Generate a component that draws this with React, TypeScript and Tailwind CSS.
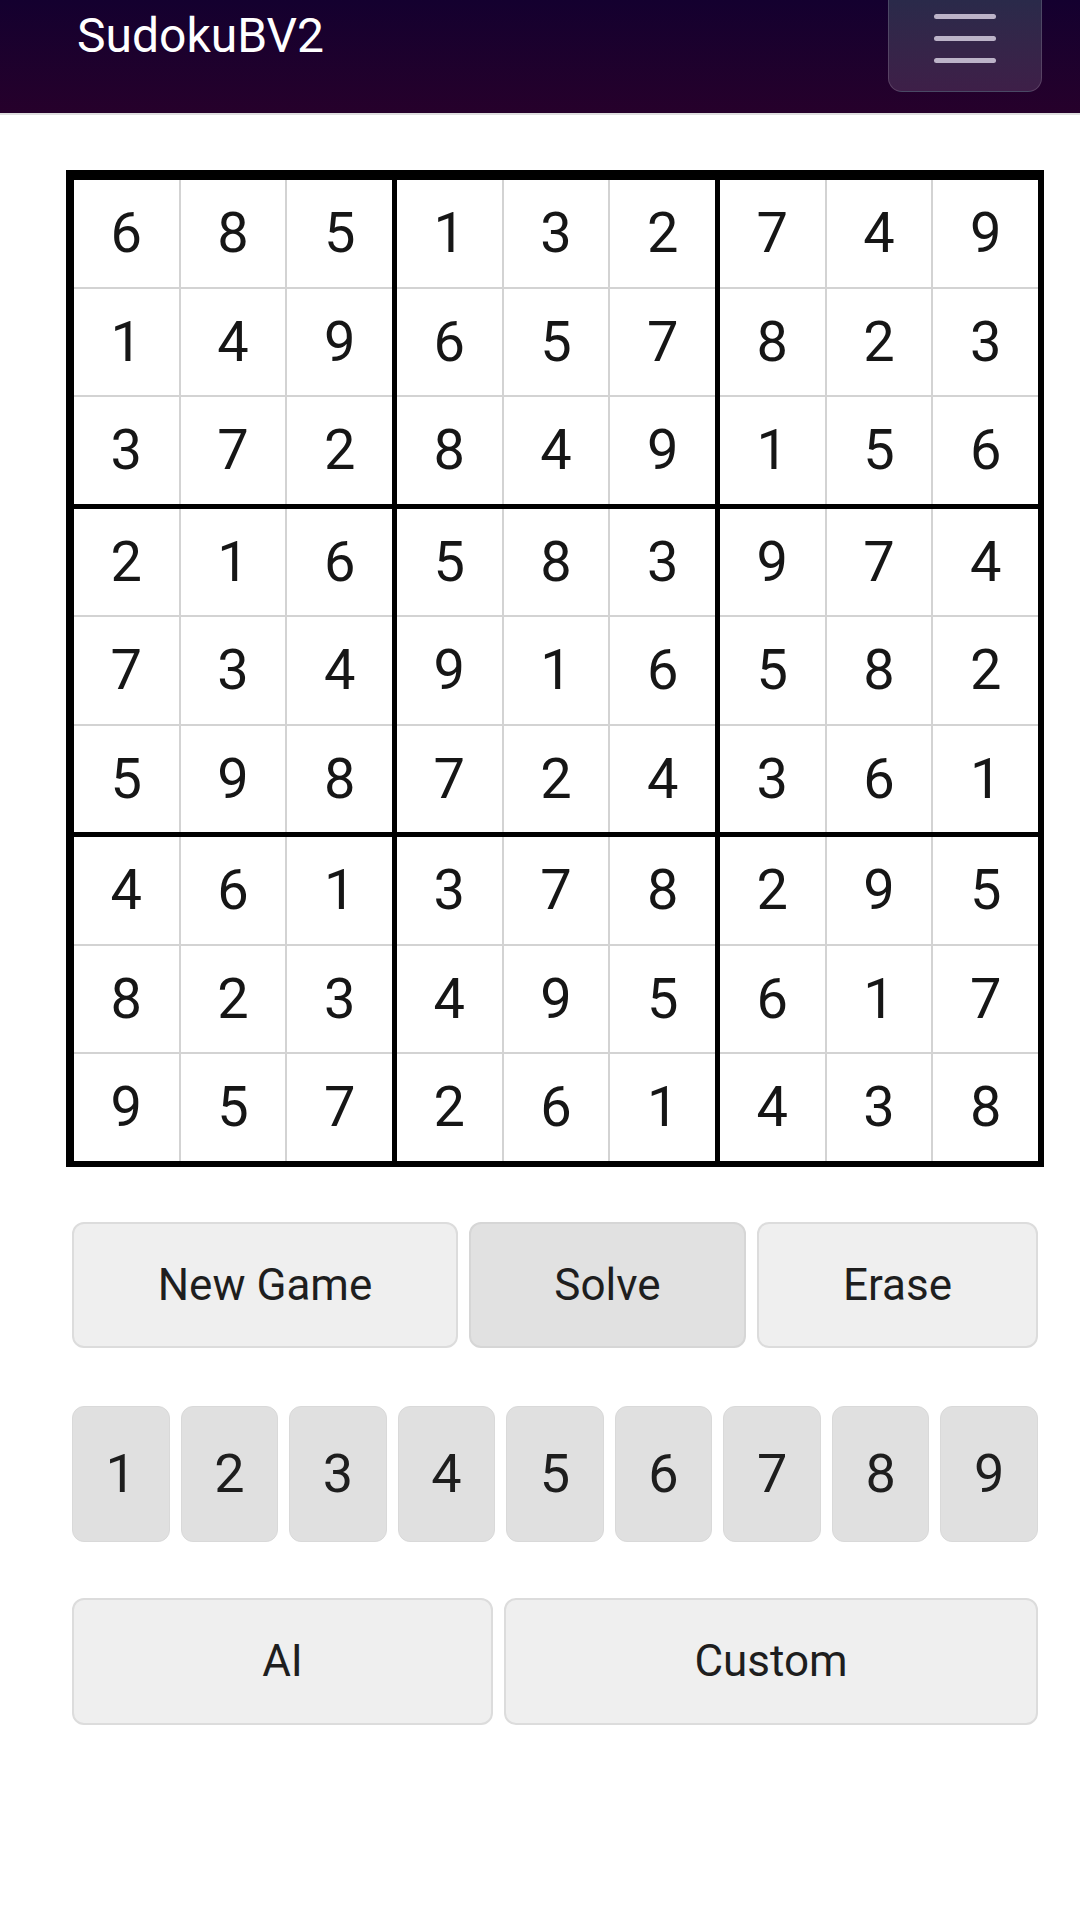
import React from "react";

const GRID = [
  "685132749",
  "149657823",
  "372849156",
  "216583974",
  "734916582",
  "598724361",
  "461378295",
  "823495617",
  "957261438",
];

function Block({ br, bc }: { br: number; bc: number }) {
  const cells: string[] = [];
  for (let r = 0; r < 3; r++) {
    for (let c = 0; c < 3; c++) {
      cells.push(GRID[br * 3 + r][bc * 3 + c]);
    }
  }
  return (
    <div className="grid grid-cols-3 gap-[2px] bg-[#d3d3d3]">
      {cells.map((d, i) => (
        <div
          key={i}
          className="h-[106.5px] bg-white flex items-center justify-center text-[56px] leading-none text-[#161616]"
        >
          {d}
        </div>
      ))}
    </div>
  );
}

export default function App() {
  const blocks: [number, number][] = [];
  for (let r = 0; r < 3; r++) for (let c = 0; c < 3; c++) blocks.push([r, c]);

  const btn =
    "h-full flex items-center justify-center rounded-[12px] border-2 text-[44px] leading-none text-[#1e1e1e]";

  return (
    <div className="min-h-[1920px] bg-white font-['Roboto','Liberation_Sans',sans-serif]">
      <header className="h-[115px] bg-gradient-to-b from-[#14002f] to-[#26002b] border-b-[2px] border-[#dedede] flex items-start justify-between pl-[77px] pr-[38px]">
        <div className="mt-[12px] text-[48px] leading-none text-white">SudokuBV2</div>
        <button className="w-[154px] h-[92px] rounded-b-[14px] border border-t-0 border-white/15 bg-gradient-to-b from-[#2a2a4a] to-[#3e1f48] flex flex-col items-center pt-[14px] gap-[17px]">
          <span className="block w-[62px] h-[5px] rounded-full bg-[#bcb3c8]" />
          <span className="block w-[62px] h-[5px] rounded-full bg-[#bcb3c8]" />
          <span className="block w-[62px] h-[5px] rounded-full bg-[#bcb3c8]" />
        </button>
      </header>

      <main className="pl-[66px]">
        <div className="mt-[55px] w-[978px] bg-black border-black border-l-[8px] border-t-[10px] border-r-[6px] border-b-[6px]">
          <div className="grid grid-cols-3 gap-[5px] bg-black">
            {blocks.map(([r, c]) => (
              <Block key={`${r}-${c}`} br={r} bc={c} />
            ))}
          </div>
        </div>

        <div className="ml-[6px] w-[966px]">
          <div className="mt-[55px] h-[126px] flex gap-[11px]">
            <button className={`${btn} w-[386px] bg-[#efefef] border-[#dcdcdc]`}>New Game</button>
            <button className={`${btn} w-[277px] bg-[#e1e1e1] border-[#d6d6d6]`}>Solve</button>
            <button className={`${btn} w-[281px] bg-[#efefef] border-[#dcdcdc]`}>Erase</button>
          </div>

          <div className="mt-[58px] h-[136px] grid grid-cols-9 gap-[11px]">
            {[1, 2, 3, 4, 5, 6, 7, 8, 9].map((n) => (
              <button
                key={n}
                className="h-full flex items-center justify-center rounded-[12px] border border-[#d9d9d9] bg-[#e0e0e0] text-[54px] leading-none text-[#1e1e1e]"
              >
                {n}
              </button>
            ))}
          </div>

          <div className="mt-[56px] h-[127px] flex gap-[11px]">
            <button className={`${btn} w-[421px] bg-[#efefef] border-[#dcdcdc]`}>AI</button>
            <button className={`${btn} flex-1 bg-[#efefef] border-[#dcdcdc]`}>Custom</button>
          </div>
        </div>
      </main>
    </div>
  );
}
